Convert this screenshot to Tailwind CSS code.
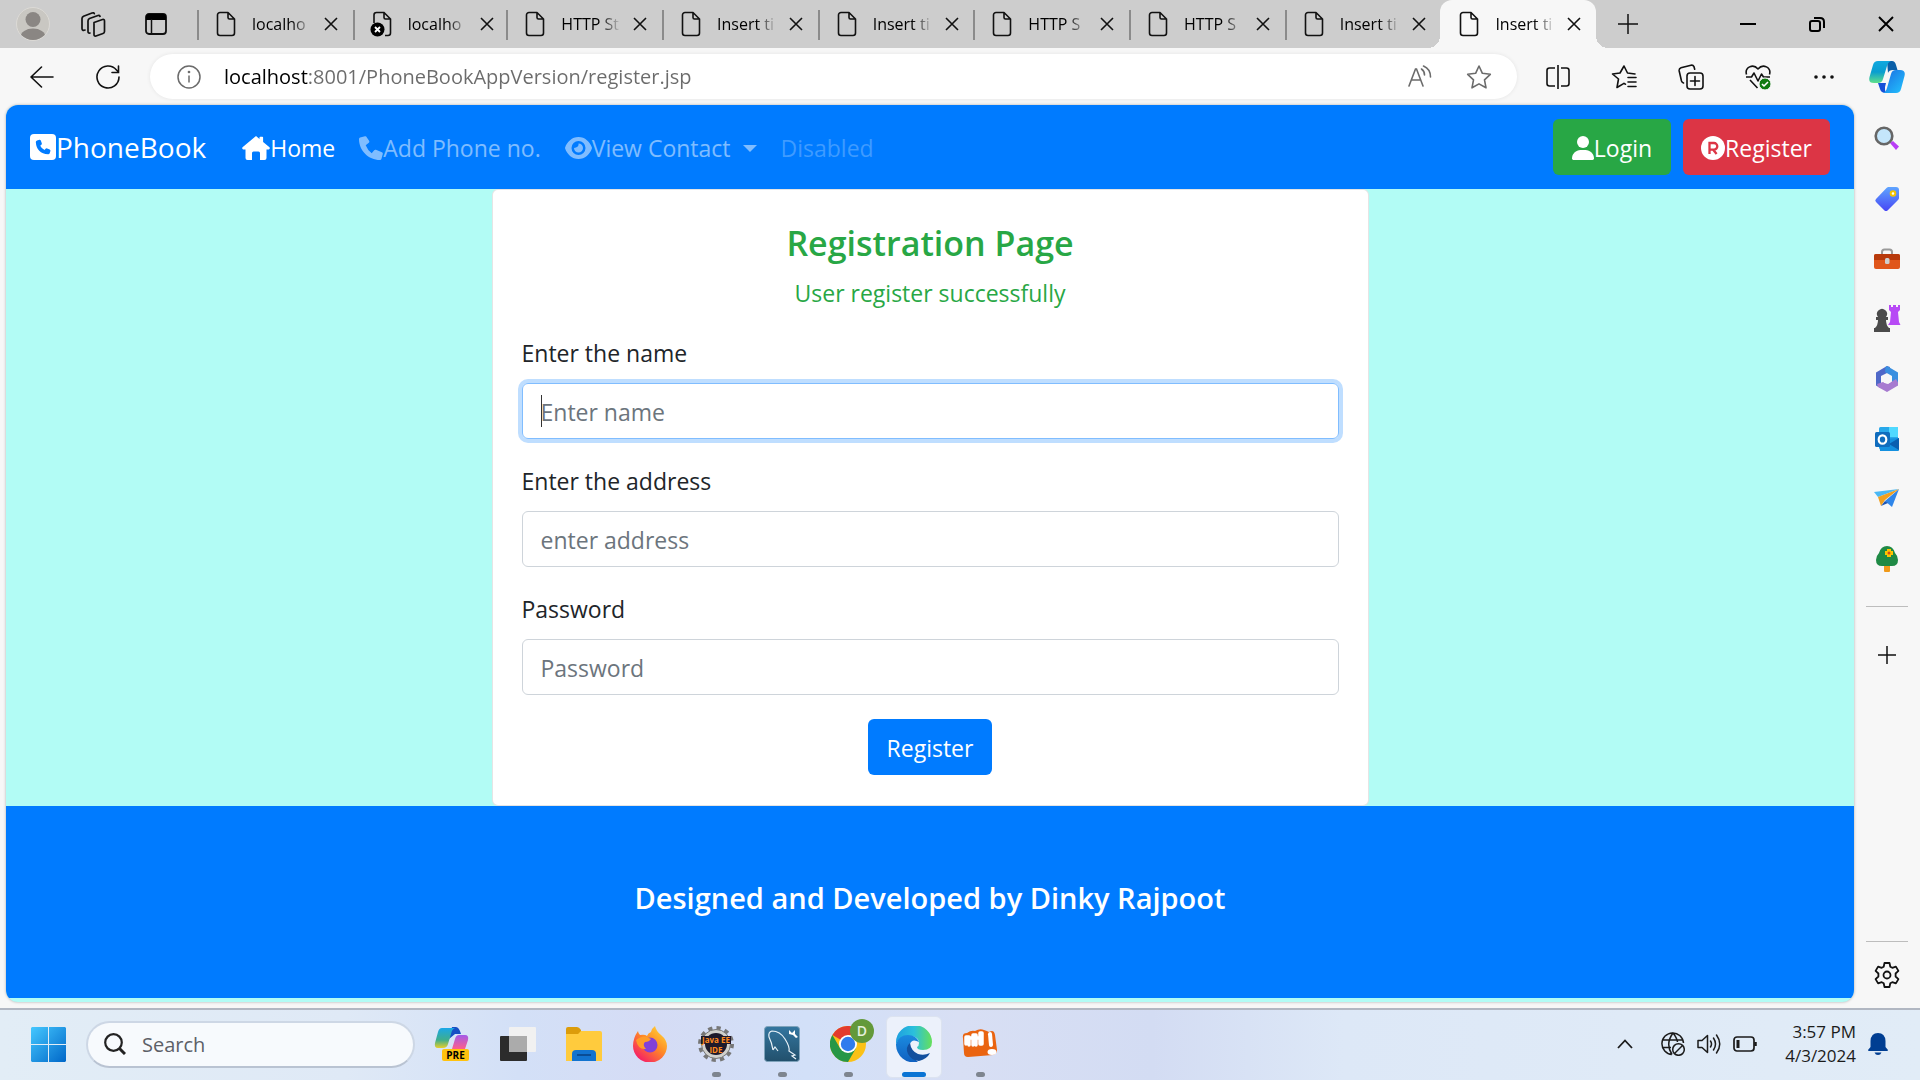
<!DOCTYPE html>
<html lang="en">
<head>
<meta charset="utf-8">
<title>PhoneBook - Register</title>
<script src="https://cdn.jsdelivr.net/npm/@tailwindcss/browser@4"></script>
</head>
<body class="min-h-screen flex flex-col bg-[#f7f7f7] font-['Open_Sans','Noto_Sans',sans-serif] text-[#212529] overflow-x-hidden">

<!-- Shared icon symbols -->
<svg class="hidden" aria-hidden="true">
  <symbol id="file" viewBox="0 0 20 26" fill="none" stroke="#111" stroke-width="1.6" stroke-linejoin="round"><path d="M4 1.5h8L18.500 8v14a2.500 2.500 0 0 1-2.500 2.500H4A2.500 2.500 0 0 1 1.500 22V4A2.500 2.500 0 0 1 4 1.500zM12 1.500V6.500A1.500 1.500 0 0 0 13.500 8h5"/></symbol>
  <symbol id="file-error" viewBox="0 0 22 26"><path d="M4 12V4A2.500 2.500 0 0 1 6.500 1.500H14L20.500 8v14a2.500 2.500 0 0 1-2.500 2.500h-3M14 1.500V6.500A1.500 1.500 0 0 0 15.500 8h5" fill="none" stroke="#111" stroke-width="1.600"/><circle cx="7.500" cy="18.500" r="7" fill="#000"/><path d="M5 16l5 5m0-5l-5 5" stroke="#fff" stroke-width="1.800"/></symbol>
  <symbol id="x" viewBox="0 0 14 14"><path d="M1 1l12 12M13 1L1 13" stroke="#111" stroke-width="1.600" fill="none"/></symbol>
</svg>

<!-- Tab strip -->
<header class="h-12 shrink-0 bg-[#cdcdcd] flex items-stretch">
  <div class="w-[197px] shrink-0 flex items-center pl-4 gap-7">
    <button aria-label="Profile" class="w-[34px]"><svg viewBox="0 0 34 34" class="w-[34px] h-[34px]"><defs><clipPath id="av"><circle cx="17" cy="17" r="16"/></clipPath></defs><circle cx="17" cy="17" r="16.500" fill="#c9c7c2" stroke="#dcdad6"/><g fill="#8a8683" clip-path="url(#av)"><ellipse cx="17" cy="12.500" rx="7.500" ry="7.500"/><ellipse cx="17" cy="30" rx="12.500" ry="8.500"/></g></svg></button>
    <button aria-label="Workspaces" class="ml-0.5"><svg viewBox="0 0 26 26" class="w-[26px] h-[26px]" fill="none" stroke="#111" stroke-width="1.700" stroke-linejoin="round" stroke-linecap="round"><path d="M14 11.500l8.500-3q2-.5 2 1.500v10.500q0 1.500-1.500 2l-7 2.500q-2 .5-2-1.500zM10 22q-2 .5-2-1.500V10q0-1.800 1.500-2.500L18 4.500q1.500-.4 2 .8M5 19q-3 1-3-1.500V7.500Q2 6 3.500 5.200L12 2q2-.6 2.300.6"/></svg></button>
    <button aria-label="Tab actions" class="ml-[11px]"><svg viewBox="0 0 22 22" class="w-[22px] h-[22px]"><rect x="1" y="1" width="20" height="20" rx="3" fill="none" stroke="#111" stroke-width="1.800"/><path d="M1 7V4a3 3 0 0 1 3-3h14a3 3 0 0 1 3 3v3z"/><path d="M6.500 6v15" stroke="#111" stroke-width="1.500"/></svg></button>
  </div>
  <nav class="flex-1 max-w-[1399px] flex text-base text-black" aria-label="Tabs">
    <div class="flex-1 min-w-0 flex items-center relative pl-[19px] before:absolute before:left-0 before:top-[10px] before:h-[30px] before:w-[2px] before:bg-[#8b8b8b]"><svg class="w-5 h-[26px] shrink-0"><use href="#file"/></svg><a href="#" class="ml-4 w-[60px] whitespace-nowrap [mask-image:linear-gradient(to_right,black_65%,transparent)]">localho</a><button aria-label="Close tab" class="ml-3"><svg class="w-[14px] h-[14px]"><use href="#x"/></svg></button></div>
    <div class="flex-1 min-w-0 flex items-center relative pl-[17px] before:absolute before:left-0 before:top-[10px] before:h-[30px] before:w-[2px] before:bg-[#8b8b8b]"><svg class="w-[22px] h-[26px] shrink-0"><use href="#file-error"/></svg><a href="#" class="ml-4 w-[60px] whitespace-nowrap [mask-image:linear-gradient(to_right,black_65%,transparent)]">localho</a><button aria-label="Close tab" class="ml-3"><svg class="w-[14px] h-[14px]"><use href="#x"/></svg></button></div>
    <div class="flex-1 min-w-0 flex items-center relative pl-[19px] before:absolute before:left-0 before:top-[10px] before:h-[30px] before:w-[2px] before:bg-[#8b8b8b]"><svg class="w-5 h-[26px] shrink-0"><use href="#file"/></svg><a href="#" class="ml-4 w-[60px] whitespace-nowrap [mask-image:linear-gradient(to_right,black_65%,transparent)]">HTTP St</a><button aria-label="Close tab" class="ml-3"><svg class="w-[14px] h-[14px]"><use href="#x"/></svg></button></div>
    <div class="flex-1 min-w-0 flex items-center relative pl-[19px] before:absolute before:left-0 before:top-[10px] before:h-[30px] before:w-[2px] before:bg-[#8b8b8b]"><svg class="w-5 h-[26px] shrink-0"><use href="#file"/></svg><a href="#" class="ml-4 w-[60px] whitespace-nowrap [mask-image:linear-gradient(to_right,black_65%,transparent)]">Insert ti</a><button aria-label="Close tab" class="ml-3"><svg class="w-[14px] h-[14px]"><use href="#x"/></svg></button></div>
    <div class="flex-1 min-w-0 flex items-center relative pl-[19px] before:absolute before:left-0 before:top-[10px] before:h-[30px] before:w-[2px] before:bg-[#8b8b8b]"><svg class="w-5 h-[26px] shrink-0"><use href="#file"/></svg><a href="#" class="ml-4 w-[60px] whitespace-nowrap [mask-image:linear-gradient(to_right,black_65%,transparent)]">Insert ti</a><button aria-label="Close tab" class="ml-3"><svg class="w-[14px] h-[14px]"><use href="#x"/></svg></button></div>
    <div class="flex-1 min-w-0 flex items-center relative pl-[19px] before:absolute before:left-0 before:top-[10px] before:h-[30px] before:w-[2px] before:bg-[#8b8b8b]"><svg class="w-5 h-[26px] shrink-0"><use href="#file"/></svg><a href="#" class="ml-4 w-[60px] whitespace-nowrap [mask-image:linear-gradient(to_right,black_65%,transparent)]">HTTP S</a><button aria-label="Close tab" class="ml-3"><svg class="w-[14px] h-[14px]"><use href="#x"/></svg></button></div>
    <div class="flex-1 min-w-0 flex items-center relative pl-[19px] before:absolute before:left-0 before:top-[10px] before:h-[30px] before:w-[2px] before:bg-[#8b8b8b]"><svg class="w-5 h-[26px] shrink-0"><use href="#file"/></svg><a href="#" class="ml-4 w-[60px] whitespace-nowrap [mask-image:linear-gradient(to_right,black_65%,transparent)]">HTTP S</a><button aria-label="Close tab" class="ml-3"><svg class="w-[14px] h-[14px]"><use href="#x"/></svg></button></div>
    <div class="flex-1 min-w-0 flex items-center relative pl-[19px] before:absolute before:left-0 before:top-[10px] before:h-[30px] before:w-[2px] before:bg-[#8b8b8b]"><svg class="w-5 h-[26px] shrink-0"><use href="#file"/></svg><a href="#" class="ml-4 w-[60px] whitespace-nowrap [mask-image:linear-gradient(to_right,black_65%,transparent)]">Insert ti</a><button aria-label="Close tab" class="ml-3"><svg class="w-[14px] h-[14px]"><use href="#x"/></svg></button></div>
    <div class="flex-1 min-w-0 flex items-center relative pl-[19px] bg-[#f7f7f7] rounded-t-xl before:absolute before:bottom-0 before:-left-3 before:size-3 before:bg-[radial-gradient(circle_at_0_0,transparent_12px,#f7f7f7_12px)] after:absolute after:bottom-0 after:-right-3 after:size-3 after:bg-[radial-gradient(circle_at_100%_0,transparent_12px,#f7f7f7_12px)]"><svg class="w-5 h-[26px] shrink-0"><use href="#file"/></svg><a href="#" class="ml-4 w-[60px] whitespace-nowrap [mask-image:linear-gradient(to_right,black_65%,transparent)]">Insert ti</a><button aria-label="Close tab" class="ml-3"><svg class="w-[14px] h-[14px]"><use href="#x"/></svg></button></div>
  </nav>
  <button aria-label="New tab" class="ml-[21px]"><svg viewBox="0 0 22 22" class="w-[22px] h-[22px]"><path d="M11 1v20M1 11h20" stroke="#111" stroke-width="1.500"/></svg></button>
  <div class="ml-auto flex items-center">
    <button aria-label="Minimize" class="w-[69px] flex justify-center"><svg viewBox="0 0 16 16" class="size-4"><path d="M0 8h16" stroke="#000" stroke-width="2"/></svg></button>
    <button aria-label="Restore" class="w-[69px] flex justify-center"><svg viewBox="0 0 16 16" class="size-4" fill="none" stroke="#000" stroke-width="2"><rect x="1" y="5" width="10" height="10" rx="2"/><path d="M5 2h6q4 0 4 4v6"/></svg></button>
    <button aria-label="Close window" class="w-[69px] flex justify-center"><svg viewBox="0 0 16 16" class="size-4"><path d="M1 1l14 14M15 1L1 15" stroke="#000" stroke-width="1.900"/></svg></button>
  </div>
</header>

<!-- Toolbar -->
<div class="h-[57px] shrink-0 flex items-center pl-[30px] pr-[15px] text-[#111]">
  <button aria-label="Back"><svg viewBox="0 0 24 24" class="size-6" fill="none" stroke="currentColor" stroke-width="1.600" stroke-linecap="round" stroke-linejoin="round"><path d="M23 12H1M11.500 2L1 12l10.500 10"/></svg></button>
  <button aria-label="Refresh" class="ml-[42px]"><svg viewBox="0 0 24 24" class="size-6" fill="none" stroke="currentColor" stroke-width="1.600" stroke-linecap="round"><path d="M23 12A11 11 0 1 1 20.500 5l2 2M22.500 1v6.500H16"/></svg></button>
  <div class="ml-[30px] flex-1 h-[45px] rounded-full bg-white shadow-[0_0_4px_rgba(0,0,0,0.08)] flex items-center pl-[27px] pr-[25px] text-[#6b6b6b]">
    <button aria-label="Site information"><svg viewBox="0 0 24 24" class="size-6" fill="none" stroke="currentColor" stroke-width="1.500"><circle cx="12" cy="12" r="11"/><path d="M12 10.500v7"/><circle cx="12" cy="7" r=".6" fill="currentColor"/></svg></button>
    <input aria-label="Address" value="localhost:8001/PhoneBookAppVersion/register.jsp" class="ml-[23px] flex-1 min-w-0 text-xl outline-none text-transparent bg-clip-text [background-image:linear-gradient(to_right,#000_84px,#6b6b6b_84px)]">
    <button aria-label="Read aloud"><svg viewBox="0 0 24 24" class="size-6" fill="none" stroke="currentColor" stroke-width="1.600" stroke-linecap="round"><path d="M1 21L7.500 4h1L15 21M3.500 15h9M13.500 4q3 2 3 6M15.500 1q7 3 7 11"/></svg></button>
    <button aria-label="Favorite" class="ml-[34px]"><svg viewBox="0 0 26 26" class="size-[26px]" fill="none" stroke="currentColor" stroke-width="1.600" stroke-linejoin="round"><path d="M13 2l3.400 7.300 7.900 1-5.800 5.500 1.500 8-7-3.900-7 3.900 1.500-8L1.700 10.300l7.900-1z"/></svg></button>
  </div>
  <div class="ml-[29px] flex items-center gap-[41px]">
    <button aria-label="Split screen"><svg viewBox="0 0 24 24" class="size-6" fill="none" stroke="currentColor" stroke-width="1.600"><path d="M9 3H3.500Q1 3 1 5.500v13Q1 21 3.500 21H9M15 3h5.500Q23 3 23 5.500v13q0 2.500-2.500 2.500H15M12 0v24"/></svg></button>
    <button aria-label="Favorites"><svg viewBox="0 0 26 26" class="size-[26px]" fill="none" stroke="currentColor" stroke-width="1.600" stroke-linecap="round" stroke-linejoin="round"><path d="M13 19.400l-7 4.100 1.500-8.500L1.500 10l7.500-1L13 2l3.500 7 7.500 1M13 19.400l1.500.8M17 13.500h8M17 18h8M17 22.500h8"/></svg></button>
    <button aria-label="Collections"><svg viewBox="0 0 26 26" class="size-[26px]" fill="none" stroke="currentColor" stroke-width="1.600" stroke-linecap="round"><rect x="9" y="9" width="16" height="16" rx="3"/><path d="M17 12.500v9M12.500 17h9M5.500 19q-1.500-.5-2-2L1.200 7Q.8 4.500 3 3.800L13 1.200q2-.5 3 1.500l.7 2.500"/></svg></button>
    <button aria-label="Browser essentials"><svg viewBox="0 0 26 26" class="size-[26px]" fill="none" stroke="currentColor" stroke-width="1.600" stroke-linejoin="round"><path d="M1.500 10.500C-.5 3.500 8-1 13 5c5-6 13.500-1.500 11.500 5.500M1 13h5.500L9 9l4 8 3.500-7 2 3H25M5 16l7.500 8"/><circle cx="20" cy="20" r="6" fill="#0f7b0f" stroke="#f7f7f7" stroke-width="1"/><path d="M17 20l2 2 4-4" stroke="#fff"/></svg></button>
    <button aria-label="Settings and more"><svg viewBox="0 0 24 24" class="size-6" fill="currentColor"><circle cx="4" cy="12" r="1.800"/><circle cx="12" cy="12" r="1.800"/><circle cx="20" cy="12" r="1.800"/></svg></button>
    <button aria-label="Copilot" class="-ml-2"><svg viewBox="0 0 36 32" class="w-9 h-8"><defs><linearGradient id="c1" x2="0" y2="1"><stop stop-color="#10a8e0"/><stop offset=".5" stop-color="#0a9ed0"/><stop offset="1" stop-color="#5fe08a"/></linearGradient><linearGradient id="c2" x2="1" y2="1"><stop stop-color="#1b6be0"/><stop offset="1" stop-color="#22c4ff"/></linearGradient></defs><path d="M18 0h5q3 0 4 4l1.500 5H24q-4 0-5 3z" fill="#0a5fa8"/><path d="M9 22h8l-1 4q-.5 3 1 6-5 0-6-4z" fill="#1650d8"/><path d="M9 0h13q-3 1-4 5l-4 13q-1 4-5 4H5q-6 0-4.500-6L4 4q1-4 5-4z" fill="url(#c1)"/><path d="M27 9h4q6 0 4.500 6L32 28q-1 4-5 4H14q3-1 4-5l4-14q1-4 5-4z" fill="url(#c2)"/></svg></button>
  </div>
</div>

<!-- Page and browser sidebar -->
<div class="flex-1 flex pl-[6px] pb-[6px]">
  <div class="flex-1 min-w-0 flex flex-col bg-[#b2fcf5] rounded-xl overflow-hidden pb-1 shadow-[0_0_3px_rgba(0,0,0,0.3)]">
    <nav class="h-[84px] shrink-0 bg-[#007bff] px-6 flex items-center text-[23px] text-white/50 whitespace-nowrap">
      <a href="#" class="flex items-center text-white text-[28px] leading-none"><svg viewBox="0 0 26 26" class="size-[26px]"><rect width="26" height="26" rx="4" fill="#fff"/><path d="M5.800 8q0-1 1.200-1.500l2.400-.7q1-.2 1.400.8l1 2.600q.3.900-.4 1.500l-1.200 1q1.500 3 4.400 4.400l1-1.300q.6-.8 1.600-.4l2.500 1.100q1 .5.700 1.500l-.7 2.200q-.4 1.100-1.500 1.100Q6.500 19.500 5.800 8z" fill="#007bff"/></svg>PhoneBook</a>
      <a href="#" class="ml-9 pt-0.5 flex items-center text-white"><svg viewBox="0 0 28 24" class="w-7 h-6" fill="#fff"><path d="M14 0l3.500 2.900V1.500q0-.7.800-.7h2q.8 0 .8.700v4.500l6.400 5.300q.9 1.700-.8 2.200H24.500V22q0 2-2 2H18v-7q0-1.500-1.500-1.500h-5Q10 15.500 10 17v7H5.500q-2 0-2-2v-8.500H1.300q-1.700-.5-.8-2.200z"/></svg>Home</a>
      <a href="#" class="ml-6 pt-0.5 flex items-center"><svg viewBox="0 0 24 24" class="size-6" fill="currentColor"><path d="M7.700 1.200A1.500 1.500 0 0 0 6 .3L1.100 1.600A1.500 1.500 0 0 0 0 3C0 14.600 9.400 24 21 24a1.500 1.500 0 0 0 1.400-1.100L23.800 18a1.500 1.500 0 0 0-.9-1.700l-6-2.500a1.500 1.500 0 0 0-1.700.4l-2.500 3.100A18 18 0 0 1 6.700 9.300l3.100-2.500a1.500 1.500 0 0 0 .4-1.700z"/></svg>Add Phone no.</a>
      <a href="#" class="ml-6 pt-0.5 flex items-center"><svg viewBox="0 0 27 22" class="w-[27px] h-[22px]" fill="currentColor" fill-rule="evenodd"><path d="M13.500 0C7 0 2 5 .2 10.300q-.3.700 0 1.400C2 17 7 22 13.500 22s11.500-5 13.300-10.300q.3-.7 0-1.400C25 5 20 0 13.500 0zm0 4a7 7 0 1 1 0 14 7 7 0 0 1 0-14zm0 2.500q.6 4-4.500 4.500a4.500 4.500 0 1 0 4.500-4.500z"/></svg>View Contact<svg viewBox="0 0 14 7" class="ml-3 w-[14px] h-[7px]" fill="currentColor"><path d="M0 0h14L7 7z"/></svg></a>
      <a href="#" class="ml-6 pt-0.5 text-white/25">Disabled</a>
      <div class="ml-auto flex gap-3 text-white">
        <a href="#" class="h-14 px-[19px] pt-0.5 rounded-md bg-[#28a745] flex items-center"><svg viewBox="0 0 22 24" class="w-[22px] h-6" fill="#fff"><circle cx="11" cy="6" r="6"/><path d="M0 22.600C0 17.500 4 14 8.500 14h5c4.500 0 8.500 3.500 8.500 8.600q0 1.400-1.400 1.400H1.400Q0 24 0 22.600z"/></svg>Login</a>
        <a href="#" class="h-14 px-[18px] pt-0.5 rounded-md bg-[#dc3545] flex items-center"><svg viewBox="0 0 24 24" class="size-6"><circle cx="12" cy="12" r="12" fill="#fff"/><path d="M8.500 18V7H13a3.300 3.300 0 0 1 0 6.600H8.500M12 13.500l3.600 4.500" fill="none" stroke="#dc3545" stroke-width="2.300"/></svg>Register</a>
      </div>
    </nav>

    <main class="flex-1">
      <form class="w-full max-w-[877px] mx-auto bg-white rounded-md border border-black/10 px-[29px] pt-[29px] pb-[30px] text-[23px] leading-9">
        <h1 class="pt-0.5 text-center text-[34px] leading-[44px] font-semibold text-[#28a745]">Registration Page</h1>
        <p class="mt-2.5 mb-6 text-center text-[#28a745]">User register successfully</p>
        <label for="name" class="block mb-3">Enter the name</label>
        <div class="relative mb-6">
          <input id="name" placeholder="Enter name" class="block w-full h-14 px-[18px] pt-0.5 rounded-md border border-[#80bdff] shadow-[0_0_0_4px_#bfdeff] outline-none placeholder:text-[#6c757d]">
          <span class="absolute left-[19px] top-3 w-px h-8 bg-[#333]"></span>
        </div>
        <label for="address" class="block mb-3">Enter the address</label>
        <input id="address" placeholder="enter address" class="block w-full h-14 mb-6 px-[18px] pt-0.5 rounded-md border border-[#ced4da] outline-none placeholder:text-[#6c757d]">
        <label for="password" class="block mb-3">Password</label>
        <input id="password" type="password" placeholder="Password" class="block w-full h-14 mb-6 px-[18px] pt-0.5 rounded-md border border-[#ced4da] outline-none placeholder:text-[#6c757d]">
        <button type="button" class="block mx-auto h-14 px-[19px] pt-0.5 rounded-md bg-[#007bff] text-white">Register</button>
      </form>
    </main>

    <footer class="h-48 shrink-0 bg-[#007bff] text-white flex items-center justify-center pb-2">
      <p class="text-[29px] font-semibold">Designed and Developed by Dinky Rajpoot</p>
    </footer>
  </div>

  <aside class="w-[66px] shrink-0 flex flex-col items-center pt-5 pb-[14px]">
    <div class="flex flex-col gap-8">
      <button aria-label="Search"><svg viewBox="0 0 28 28" class="size-7"><path d="M17 18l3-2 6 5.500-3 3.500z" fill="#b83df5"/><circle cx="11" cy="11" r="8.300" fill="#c4e6fb" stroke="#666" stroke-width="2.600"/></svg></button>
      <button aria-label="Shopping"><svg viewBox="0 0 28 28" class="size-7"><defs><linearGradient id="tg" x2="0" y2="1"><stop stop-color="#5fa5ff"/><stop offset="1" stop-color="#4747f5"/></linearGradient></defs><path d="M15 2h8q3 0 3 3v8q0 1-1 2L14.500 25.500q-1.500 1-3 0L3 17q-1.500-1.500 0-3L13.500 3z" fill="url(#tg)"/><circle cx="20" cy="8.500" r="2.300" fill="#fff" stroke="#f5c400" stroke-width="2"/></svg></button>
      <button aria-label="Tools"><svg viewBox="0 0 28 28" class="size-7"><path d="M9 10V7q0-2.500 2.500-2.500h5Q19 4.500 19 7v3" fill="none" stroke="#9a9a9a" stroke-width="2"/><rect x="1" y="9" width="26" height="15" rx="2" fill="#e0561b"/><path d="M1 11q0-2 2-2h22q2 0 2 2v4H1z" fill="#b83a0c"/><rect x="12" y="13" width="4.500" height="6" rx="1.500" fill="#cfcfcf"/></svg></button>
      <button aria-label="Games"><svg viewBox="0 0 28 28" class="size-7"><path d="M16 0h2v2h2V0h3v2h2V0h2v5l-2 2 1 10 1.500 3H15l2-3 1-10-2-2z" fill="#b74af5"/><path d="M5 12a5 5 0 1 1 8 0h2v3h-2q0 5 3 8h1v4H1v-4h1q3-3 3-8H3v-3z" fill="#4b4b4b"/></svg></button>
      <button aria-label="Microsoft 365"><svg viewBox="0 0 28 28" class="size-7"><path d="M14 1L3 7.500v13l5 2.700V11l8-4 1-5z" fill="#4f68c8"/><path d="M14 1l11 6.500v13L19 17v-6l-7-4 .5-5z" fill="#3a8fe0"/><path d="M25 17.500v3L14 27 5 22l-1-3 6-2 5 2 8-5z" fill="#a77bd0"/><circle cx="14" cy="14" r="4.600" fill="#f7f7f7"/></svg></button>
      <button aria-label="Outlook"><svg viewBox="0 0 28 28" class="size-7"><rect x="6" y="2" width="19" height="22" rx="1.500" fill="#28a8ea"/><path d="M16 2h9v10h-9z" fill="#50d9ff"/><path d="M6 14l20-1v12q0 1-1 1H7z" fill="#1490df"/><path d="M26 13l-10 6 10 6z" fill="#0a5fb0"/><rect x="2" y="7" width="15" height="15" rx="1.500" fill="#0f6cbd"/><ellipse cx="9.500" cy="14.500" rx="3.800" ry="4.200" fill="none" stroke="#fff" stroke-width="2.200"/></svg></button>
      <button aria-label="Drop"><svg viewBox="0 0 28 28" class="size-7"><path d="M1 7l25-3L5 12z" fill="#4ab8f5"/><path d="M26 4L19 22l-7-6z" fill="#2f86ea"/><path d="M26 4L5 12l3 9 4-6z" fill="#f0a020"/><path d="M8 21l4-5 3 2z" fill="#1b55b5"/></svg></button>
      <button aria-label="E-tree"><svg viewBox="0 0 28 28" class="size-7"><rect x="11" y="18" width="6" height="9" rx="1" fill="#f09a1a"/><path d="M14 1q6 0 8 7 3 3 3 7 0 6-6 6H9q-6 0-6-6 0-4 3-7 2-7 8-7z" fill="#1f8a45"/><path d="M16 4v8M12 8h8" stroke="#ffc400" stroke-width="4"/><circle cx="16" cy="8" r="1.500" fill="#d94a1a"/></svg></button>
    </div>
    <hr class="mt-[33px] w-[42px] border-[#bdbdbd]">
    <button aria-label="Customize" class="mt-[39px]"><svg viewBox="0 0 18 18" class="size-[18px]"><path d="M9 0v18M0 9h18" stroke="#111" stroke-width="1.500"/></svg></button>
    <hr class="mt-auto w-[42px] border-[#bdbdbd]">
    <button aria-label="Sidebar settings" class="mt-5"><svg viewBox="0 0 26 26" class="size-[26px]" fill="none" stroke="#111" stroke-width="1.800" stroke-linejoin="round"><path d="M10.500 1h5l.8 3.700 2 1.100 3.600-1.200 2.500 4.300L21.600 11.500v3l2.800 2.600-2.500 4.300-3.600-1.200-2 1.100-.8 3.700h-5l-.8-3.700-2-1.100-3.600 1.200-2.500-4.300 2.800-2.600v-3L1.600 8.900l2.500-4.300 3.600 1.200 2-1.100z"/><circle cx="13" cy="13" r="3.500"/></svg></button>
  </aside>
</div>

<!-- Taskbar -->
<footer class="h-[72px] shrink-0 border-t-2 border-[#b1b7c2] bg-[linear-gradient(to_right,#e2edf6,#dfe9f6_18%,#d3e0f7_27%,#d5dcf5_34%,#d2e0f8_42%,#d8dff4_50%,#d3dcf3_60%,#dde8f7_70%,#e1ecf7)] flex items-center pl-[31px] pr-8 pb-0.5">
  <button aria-label="Start"><svg viewBox="0 0 35 35" class="size-[35px]"><defs><linearGradient id="w" x2="1" y2="1"><stop stop-color="#45c8ff"/><stop offset="1" stop-color="#0067c8"/></linearGradient></defs><path d="M1 0h16v17H0V1zM18 0h16l1 1v16H18zM0 18h17v17H1l-1-1zM18 18h17v16l-1 1H18z" fill="url(#w)"/></svg></button>
  <label class="ml-5 w-[329px] h-[47px] rounded-full bg-[#f7fafd] border-2 border-[#cdd7e5] border-b-[#b9c3d2] flex items-center pl-4">
    <svg viewBox="0 0 22 22" class="size-[22px]" fill="none" stroke="#222" stroke-width="2.200"><circle cx="9.500" cy="9.500" r="8.300"/><path d="M15 15l6 6" stroke-width="3"/></svg>
    <input aria-label="Search" placeholder="Search" class="ml-4 w-60 pt-0.5 text-xl outline-none placeholder:text-[#5c6067]">
  </label>
  <div class="ml-1 flex h-full items-center">
    <button aria-label="Copilot preview" class="w-[66px] flex justify-center"><svg viewBox="0 0 36 34" class="w-9 h-[34px]"><defs><linearGradient id="p1" x2="0" y2="1"><stop stop-color="#1aa7e8"/><stop offset=".6" stop-color="#3fae8c"/><stop offset="1" stop-color="#e8cf2a"/></linearGradient><linearGradient id="p2" x2="0" y2="1"><stop stop-color="#a35ae8"/><stop offset="1" stop-color="#ff5f8a"/></linearGradient></defs><path d="M18 0h4q3 0 5 7h-6l-6 5z" fill="#174fc4"/><path d="M8 1h13q-3 1-4 6l-3 10q-1 4-5 4H4q-4 0-3-5L4 5q1-4 4-4z" fill="url(#p1)"/><path d="M25 8h6q4 0 3 5l-3 9H18l3-10q1-4 4-4z" fill="url(#p2)"/><rect x="8" y="22" width="27" height="12" rx="2" fill="#ffc20e"/><text x="21.500" y="31.500" font-size="10" font-weight="700" text-anchor="middle" fill="#000">PRE</text></svg></button>
    <button aria-label="Task view" class="w-[66px] flex justify-center"><svg viewBox="0 0 36 34" class="w-9 h-[34px]"><rect y="9" width="27" height="25" rx="1" fill="#2c2c2c"/><rect x="9" y="0" width="27" height="25" rx="1" fill="#f1f1f1"/><path d="M9 9h18v16H9z" fill="#ababab"/></svg></button>
    <button aria-label="File Explorer" class="w-[66px] flex justify-center"><svg viewBox="0 0 36 34" class="w-9 h-[34px]"><path d="M0 2q0-2 2-2h9q2 0 4 3v6H0z" fill="#dc9c0a"/><path d="M0 7h12l3-3h19q2 0 2 2v28H0z" fill="#ffcb3d"/><path d="M6 34v-7q0-4 4-4h16q4 0 4 4v7z" fill="#1273cf"/><path d="M11 28h14" stroke="#0a4c94" stroke-width="2"/></svg></button>
    <button aria-label="Firefox" class="w-[66px] flex justify-center"><svg viewBox="0 0 34 36" class="w-[34px] h-9"><defs><linearGradient id="ff" x1="1" x2=".2" y2="1"><stop stop-color="#ffe43d"/><stop offset=".5" stop-color="#ff8a26"/><stop offset="1" stop-color="#f5156c"/></linearGradient></defs><path d="M18 6q1-4 4-6 1 5 6 9 6 5 6 11A17 16.500 0 0 1 0 20Q0 12 5 5q0 2 2 4 5-1 7 1 1-3 4-4z" fill="url(#ff)"/><circle cx="17" cy="19" r="7.500" fill="#8240d8"/><path d="M3 14q6-5 11-3l4 2q-2 3-6 3-3 3 1 7-8 1-10-9z" fill="#ff9b28"/></svg></button>
    <button aria-label="Java EE IDE" class="relative w-[66px] h-[66px] flex justify-center items-center"><svg viewBox="0 0 36 36" class="size-9"><circle cx="18" cy="18" r="16" fill="none" stroke="#777" stroke-width="4" stroke-dasharray="4.200 4.180"/><circle cx="18" cy="18" r="14.500" fill="#d0d0cc" stroke="#777"/><circle cx="18" cy="18" r="11" fill="#1e1a2b"/><rect x="3" y="10" width="30" height="8" fill="#1e1a2b"/><text x="18" y="17" font-size="8" font-weight="700" text-anchor="middle" fill="#ff8a1e">Java EE</text><text x="18" y="27" font-size="8" font-weight="700" text-anchor="middle" fill="#ff8a1e">IDE</text></svg><span class="absolute bottom-0 w-[9px] h-[5px] rounded-full bg-[#7e858f]"></span></button>
    <button aria-label="MySQL Workbench" class="relative w-[66px] h-[66px] flex justify-center items-center"><svg viewBox="0 0 36 36" class="size-9"><defs><linearGradient id="my" x2="0" y2="1"><stop stop-color="#34769f"/><stop offset="1" stop-color="#22506c"/></linearGradient></defs><rect x=".5" y=".5" width="35" height="35" rx="3" fill="url(#my)" stroke="#7fa3bb"/><path d="M9 24q-1-7-4-13-1-5 3-6 8 0 13 8 5 8 4 12l6 4-3 1 4 3M9 24l2-3 3 4" fill="none" stroke="#e8f2f8" stroke-width="1.200"/><path d="M25 4l3 3 3-3v4l3 3-2 1-3-3-4-1z" fill="#fff"/></svg><span class="absolute bottom-0 w-[9px] h-[5px] rounded-full bg-[#7e858f]"></span></button>
    <button aria-label="Chrome" class="relative w-[66px] h-[66px] flex justify-center items-center"><svg viewBox="0 0 36 36" class="size-9"><circle cx="18" cy="18" r="18" fill="#fbc116"/><path d="M18 18L2.400 9A18 18 0 0 1 33.600 9H18z" fill="#e33b2e"/><path d="M2.400 9L10.200 22.500 18 27l0 9A18 18 0 0 1 2.400 9z" fill="#269746"/><path d="M18 36l7.800-13.500H12z" fill="#269746"/><circle cx="18" cy="18" r="9" fill="#fff"/><circle cx="18" cy="18" r="7.200" fill="#2f7cee"/></svg><span class="absolute left-[35px] top-2 size-6 rounded-full bg-[#63993a] text-[#e6f0dd] text-sm font-semibold leading-6 text-center">D</span><span class="absolute bottom-0 w-[9px] h-[5px] rounded-full bg-[#7e858f]"></span></button>
    <button aria-label="Edge" class="relative w-[66px] h-[66px] flex justify-center items-center"><span class="absolute inset-x-[5px] top-[5px] -bottom-px rounded-md bg-[#ecf1fb] border border-[#dce3f0]"></span><svg viewBox="0 0 36 36" class="relative size-9"><defs><linearGradient id="e1"><stop stop-color="#1e9fe0"/><stop offset=".5" stop-color="#2bc0dc"/><stop offset="1" stop-color="#66e05a"/></linearGradient><linearGradient id="e2" x2="0" y2="1"><stop stop-color="#1b8be0"/><stop offset="1" stop-color="#1060c0"/></linearGradient></defs><path d="M0 16A18 17 0 0 1 36 16q0 8-9 8-6 0-6-3 2-1 2-4 0-6-8-7Q5 9 0 18z" fill="url(#e1)"/><path d="M0 18Q3 9 12 9q8 0 11 7-7-4-9 2-2 10 8 18A18 18 0 0 1 0 18z" fill="url(#e2)"/><path d="M14 17q-5 4-2 11 4 7 11 7 8-2 11-8-6 3-12 1-7-3-8-11z" fill="#124f9e"/></svg><span class="absolute bottom-0 w-6 h-[5px] rounded-full bg-[#0a74d4]"></span></button>
    <button aria-label="Fist app" class="relative w-[66px] h-[66px] flex justify-center items-center"><svg viewBox="0 0 36 30" class="w-9 h-[30px]"><path d="M1 9Q0 4 5 4q4-3 8-2 5-3 9-1 3 1 5 2 5-3 6 3l2 15q0 4-4 5L6 28q-4 0-4-4z" fill="#ea6410"/><g fill="none" stroke="#fff" stroke-linecap="round" stroke-linejoin="round"><path d="M4 15V8h3v8M11 16V6h3v10M18 15V4h2v11M4 9h14" stroke-width="3.500"/><path d="M28 5l1 11" stroke-width="4"/></g><ellipse cx="30" cy="23" rx="4.500" ry="3" fill="#fff"/></svg><span class="absolute bottom-0 w-[9px] h-[5px] rounded-full bg-[#7e858f]"></span></button>
  </div>
  <div class="ml-auto flex items-center text-[#1b1b1b]">
    <button aria-label="Show hidden icons"><svg viewBox="0 0 16 10" class="w-4 h-[10px]" fill="none" stroke="currentColor" stroke-width="1.800"><path d="M1 9l7-7.500L15 9"/></svg></button>
    <button aria-label="Network and volume" class="ml-7 flex gap-3">
      <svg viewBox="0 0 24 24" class="size-6" fill="none" stroke="currentColor" stroke-width="1.500"><path d="M11 22.500A10.800 10.800 0 1 1 22.500 11M1.500 8h21M1.500 15.500H10M11 22.500Q4 12 12 1q4 5 4.500 9"/><circle cx="17.500" cy="17.500" r="5.800"/><path d="M13.500 21.500l8-8"/></svg>
      <svg viewBox="0 0 24 24" class="size-6" fill="none" stroke="currentColor" stroke-width="1.500" stroke-linejoin="round" stroke-linecap="round"><path d="M1 8.500h4L10.500 3.500v17L5 15.500H1zM13.500 9q2 3 0 6M16.500 6q4 6 0 12M19.500 3q6.500 9 0 18"/></svg>
      <svg viewBox="0 0 24 24" class="size-6" fill="none" stroke="currentColor" stroke-width="1.700"><rect x="1" y="5" width="20" height="14" rx="3"/><path d="M22.500 10v4" stroke-width="2.500"/><path d="M5 8v8" stroke-width="3"/></svg>
    </button>
    <button aria-label="Date and time" class="ml-6 w-[75px] whitespace-nowrap text-right text-[17px] leading-6 flex flex-col items-end"><span>3:57 PM</span><span>4/3/2024</span></button>
    <button aria-label="Notifications" class="ml-3"><svg viewBox="0 0 20 24" class="w-5 h-6" fill="#003e92"><path d="M10 1q7 0 7.500 8v6l2.500 3q0 1-1 1H1q-1 0-1-1l2.500-3V9Q3 1 10 1zM6.500 20.500h7Q12.500 23 10 23t-3.500-2.500z"/></svg></button>
  </div>
</footer>
</body>
</html>
